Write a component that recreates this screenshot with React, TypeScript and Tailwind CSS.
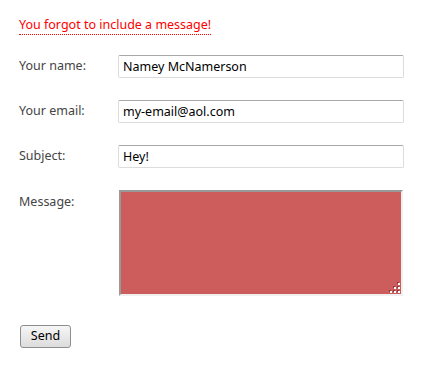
import React from "react";

function Grip() {
  const pts = [
    [8, 0],
    [4, 4],
    [8, 4],
    [0, 8],
    [4, 8],
    [8, 8],
  ];
  return (
    <svg width="11" height="11" viewBox="0 0 11 11" className="absolute right-[3px] bottom-[3px]" shapeRendering="crispEdges">
      {pts.map(([x, y], i) => (
        <g key={i}>
          <rect x={x} y={y} width="2" height="2" fill="#8a3a3a" />
          <rect x={x + 1} y={y + 1} width="2" height="2" fill="#ffffff" />
        </g>
      ))}
    </svg>
  );
}

export default function App() {
  const font = { fontFamily: '"Noto Sans", "Open Sans", sans-serif' };
  const inputCls =
    "w-[286px] h-[23px] px-[4px] text-[12.5px] text-black border border-[#dcdcdc] border-t-[#a8a8a8] rounded-[2px] outline-none";
  return (
    <div className="w-[424px] h-[369px] bg-white text-[12.5px]" style={font}>
      <div className="pl-[19px] pt-[16px]">
        <div className="inline-block text-[#f00] leading-[17px] border-b border-dotted border-[#f00] pb-[1px]">
          You forgot to include a message!
        </div>
        <div className="mt-[20px] flex flex-col gap-[22px]">
          <div className="flex items-center">
            <label className="w-[99px] text-[#444]">Your name:</label>
            <input readOnly value="Namey McNamerson" className={inputCls} style={font} />
          </div>
          <div className="flex items-center">
            <label className="w-[99px] text-[#444]">Your email:</label>
            <input readOnly value="my-email@aol.com" className={inputCls} style={font} />
          </div>
          <div className="flex items-center">
            <label className="w-[99px] text-[#444]">Subject:</label>
            <input readOnly value="Hey!" className={inputCls} style={font} />
          </div>
          <div className="flex items-start">
            <label className="w-[100px] text-[#444] pt-[3px]">Message:</label>
            <div className="relative w-[284px] h-[106px]">
              <textarea
                readOnly
                className="block w-full h-full bg-[#cd5c5c] border-2 border-[#999] border-r-[#f0f0f0] border-b-[#f0f0f0] outline-none resize-none"
              />
              <Grip />
            </div>
          </div>
        </div>
        <button
          className="mt-[29px] ml-[1px] w-[51px] h-[23px] text-[12.5px] text-black border border-[#8e8e8e] rounded-[3px] bg-gradient-to-b from-[#f6f6f6] to-[#dcdcdc] leading-none"
          style={font}
        >
          Send
        </button>
      </div>
    </div>
  );
}
